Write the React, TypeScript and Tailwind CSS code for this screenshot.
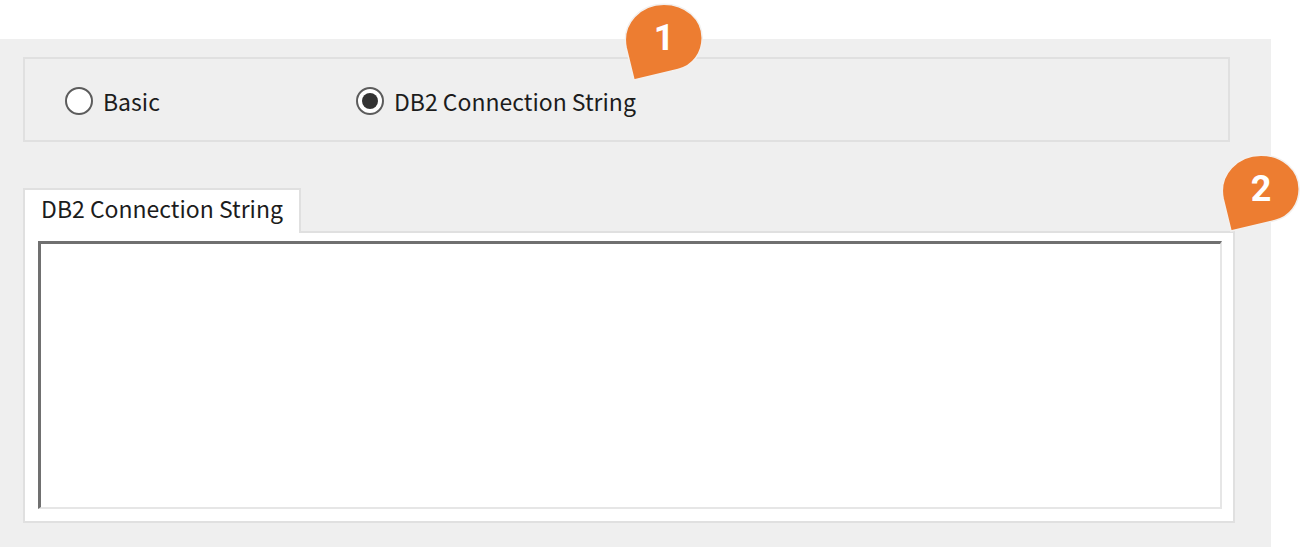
import { useState } from "react";

function Pin({ label }: { label: string }) {
  return (
    <div className="relative flex h-20 w-20 justify-center pt-3">
      <svg viewBox="0 0 80 80" className="absolute inset-0 h-20 w-20" aria-hidden="true">
        <path
          d="M10 78 L2.2 46 C-3 21 17 2.2 40 2.2 C61.5 2.2 78.2 17 78.2 36 C78.2 51 69 64 54 67.5 Z"
          fill="#ed7d31"
          stroke="#f3f0ee"
          strokeWidth="1.5"
        />
      </svg>
      <span className="relative text-4xl font-bold leading-[48px] text-white">{label}</span>
    </div>
  );
}

const modes = ["Basic", "DB2 Connection String"];

export default function App() {
  const [mode, setMode] = useState(modes[1]);
  const [value, setValue] = useState("");

  return (
    <div className="flex min-h-screen flex-col bg-white pt-[39px] pr-[31px] font-['Roboto',sans-serif]">
      <main className="flex grow flex-col bg-[#efefef] pt-[18px] pr-9 pb-6 pl-[23px] font-['Noto_Sans_CJK_JP',sans-serif] text-[23px] leading-7 text-[#1c1c1c]">
        <div
          role="radiogroup"
          aria-label="Connection type"
          className="relative mr-[5px] flex h-[85px] items-center border-2 border-[#e0e0e0] pt-[2px] pl-10"
        >
          {modes.map((m) => (
            <label key={m} className="flex w-[291px] items-center gap-[10px] whitespace-nowrap">
              <input
                type="radio"
                name="mode"
                value={m}
                checked={mode === m}
                onChange={() => setMode(m)}
                className="grid size-7 shrink-0 appearance-none place-content-center rounded-full border-2 border-[#5c5c5c] bg-white before:size-4 before:rounded-full checked:before:bg-[#333333]"
              />
              {m}
            </label>
          ))}
          <div className="absolute -top-[57px] left-[599px] font-['Roboto',sans-serif]">
            <Pin label="1" />
          </div>
        </div>

        <div className="mt-[46px] flex" role="tablist">
          <button
            type="button"
            role="tab"
            id="tab-string"
            aria-selected="true"
            aria-controls="panel-string"
            className="relative z-10 -mb-[2px] h-[45px] w-[278px] border-2 border-b-0 border-[#e0e0e0] bg-white pb-[7px] whitespace-nowrap"
          >
            DB2 Connection String
          </button>
        </div>
        <section
          role="tabpanel"
          id="panel-string"
          aria-labelledby="tab-string"
          className="relative flex grow flex-col border-2 border-[#e0e0e0] bg-white pt-2 pr-[11px] pb-3 pl-[13px]"
        >
          <textarea
            aria-label="DB2 Connection String"
            value={value}
            onChange={(e) => setValue(e.target.value)}
            className="w-full grow resize-none border-t-[3px] border-r-2 border-b-2 border-l-[3px] border-t-[#707070] border-r-[#e6e6e6] border-b-[#e6e6e6] border-l-[#707070] bg-white p-2 outline-none"
          />
          <div className="absolute -top-20 -right-[68px] font-['Roboto',sans-serif]">
            <Pin label="2" />
          </div>
        </section>
      </main>
    </div>
  );
}
